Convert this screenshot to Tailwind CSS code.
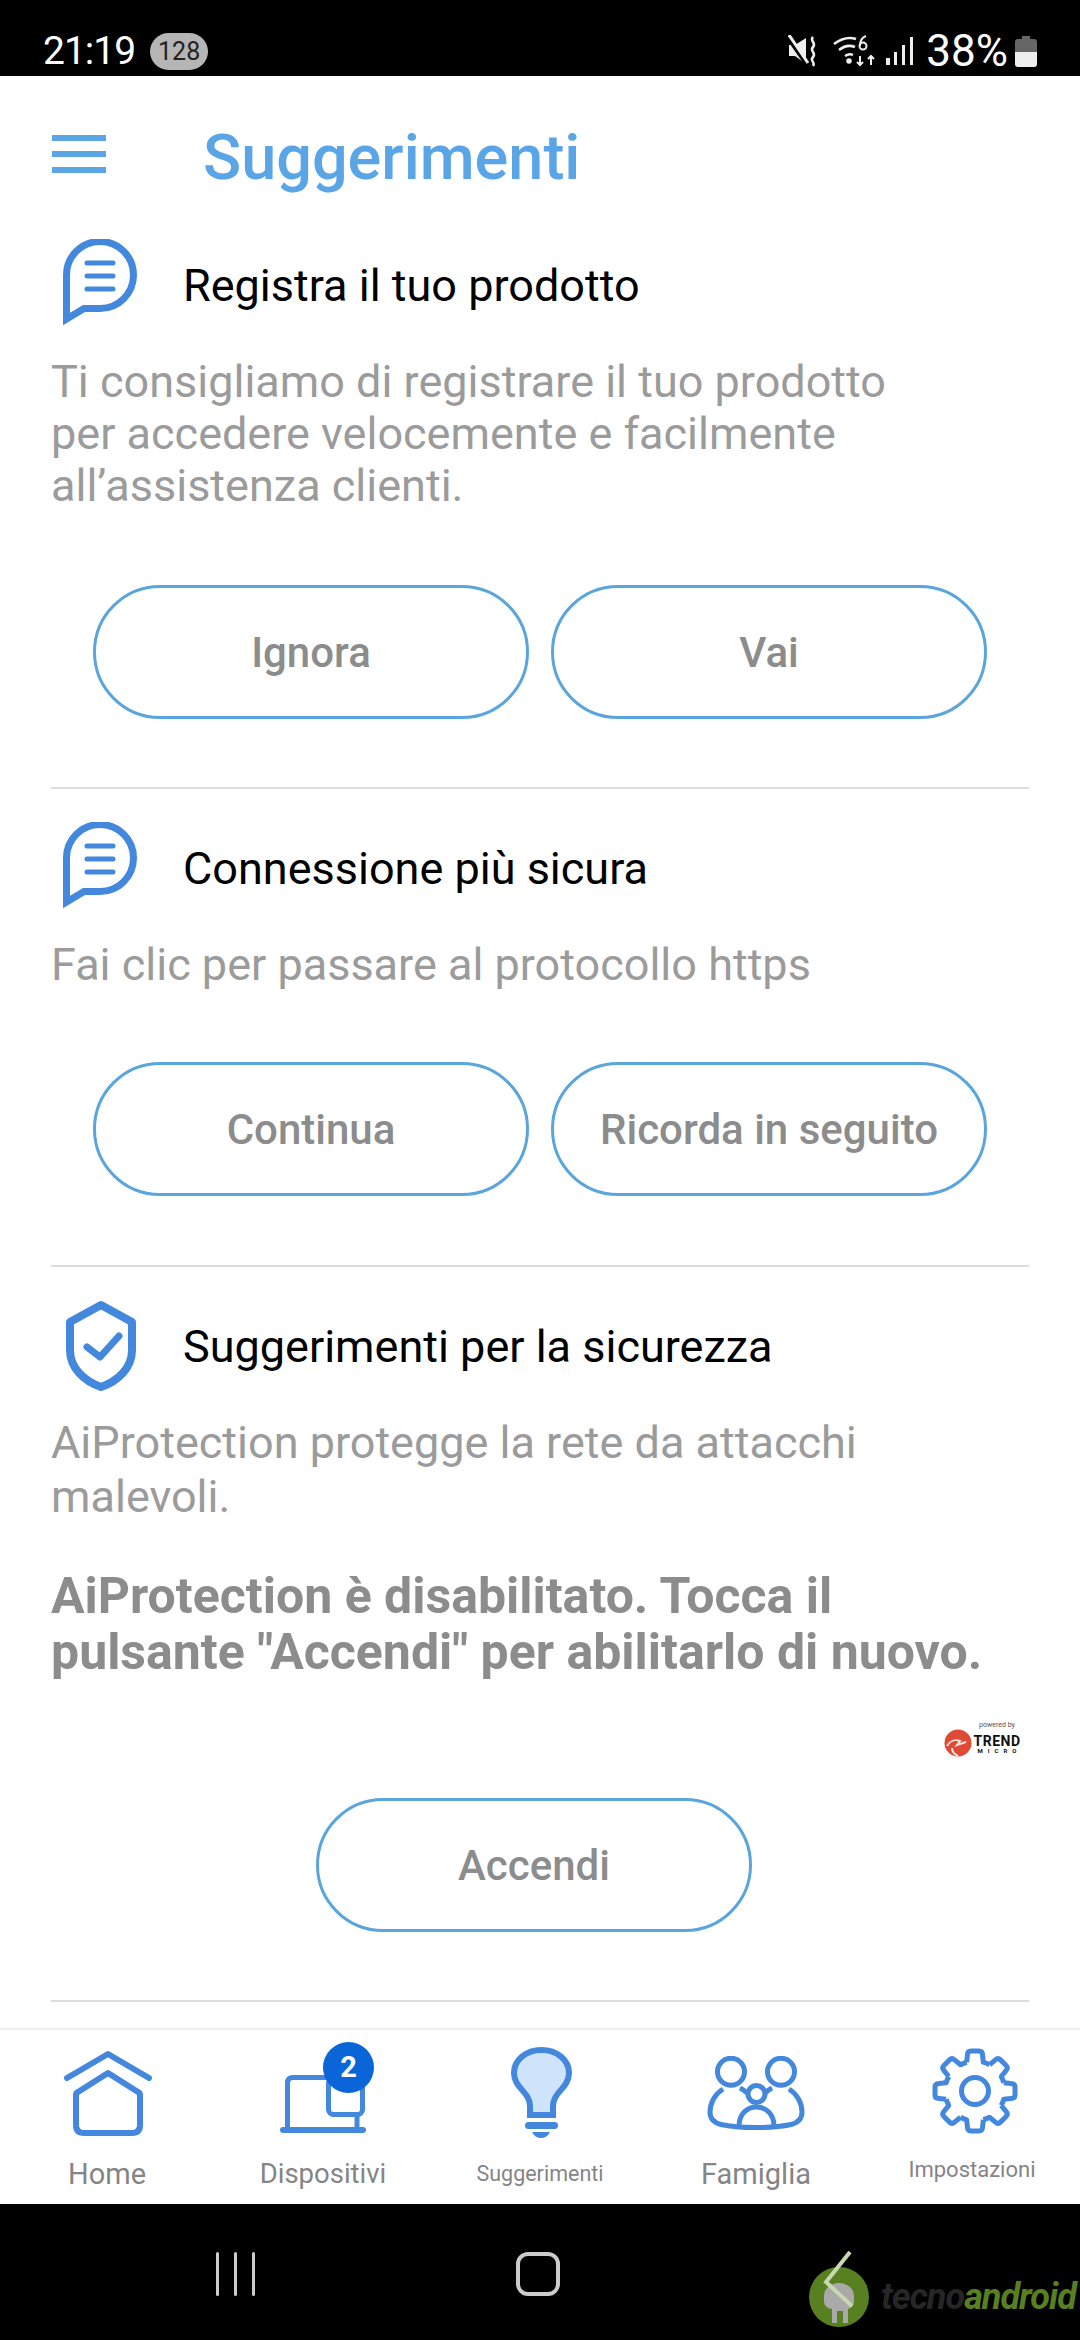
<!DOCTYPE html>
<html lang="it">
<head>
    <meta charset="UTF-8">
    <title>Suggerimenti</title>
    <script src="https://cdn.jsdelivr.net/npm/@tailwindcss/browser@4"></script>
</head>
<body class="bg-black font-['Roboto',sans-serif]">
<div class="w-[1080px] h-[2340px] flex flex-col overflow-hidden">

    <!-- status bar -->
    <div class="h-[76px] shrink-0 bg-black text-white flex items-center justify-between pl-[43px] pr-[43px] pt-[26px]">
        <div class="flex items-center gap-[15px]">
            <span class="text-[39px] leading-none tracking-[-1px]">21:19</span>
            <span class="w-[58px] h-[37px] rounded-full bg-[#b5b5b5] text-[#222] text-[25px] leading-[37px] text-center">128</span>
        </div>
        <div class="flex items-center">
            <svg class="w-[30px] h-[32px] mr-[15px]" viewBox="0 0 30 32" fill="none">
                <path d="M1 10h6L18 3v26L7 21H1z" fill="#eee"/>
                <path d="M0 2l21 30" stroke="#000" stroke-width="5"/>
                <path d="M1 0l19 28" stroke="#eee" stroke-width="3"/>
                <path d="M25 2c-4 4 4 6 0 10s4 6 0 10 3 5 0 9" stroke="#eee" stroke-width="2.500"/>
            </svg>
            <svg class="w-[44px] h-[32px] mr-[9px]" viewBox="0 0 44 32" fill="none" stroke="#eee" stroke-width="2.500">
                <path d="M1 9c8-6 16-7 22-5"/>
                <path d="M6 15c5-4 11-5 16-3"/>
                <path d="M12 21c3-2 6-2 8-1"/>
                <circle cx="16" cy="26" r="1.500" fill="#eee"/>
                <path d="M27 21v9m-3-3l3 3 3-3M38 30v-9m-3 3l3-3 3 3" stroke-width="2"/>
                <circle cx="30" cy="11" r="3.500" stroke-width="2"/>
                <path d="M33 1c-3 1-6 4-6 10" stroke-width="2"/>
            </svg>
            <svg class="w-[27px] h-[28px] mr-[13px]" viewBox="0 0 27 28" fill="#eee">
                <rect x="0" y="21" width="4" height="7"/>
                <rect x="8" y="15" width="3" height="13"/>
                <rect x="16" y="8" width="3" height="20"/>
                <rect x="24" y="0" width="3" height="28"/>
            </svg>
            <span class="text-[44px] leading-none">38%</span>
            <svg class="w-[22px] h-[31px] ml-[7px]" viewBox="0 0 22 31">
                <path d="M7 0h8v3h4q3 0 3 3v10H0V6q0-3 3-3h4z" fill="#666"/>
                <path d="M0 16h22v12q0 3-3 3H3q-3 0-3-3z" fill="#eee"/>
            </svg>
        </div>
    </div>

    <!-- content -->
    <div class="h-[2128px] shrink-0 bg-white flex flex-col">
        <header class="h-[146px] shrink-0 flex items-center pl-[52px] pt-[16px]">
            <div class="w-[54px] flex flex-col gap-[10px] mt-[-6px]">
                <span class="h-[6px] bg-[#5aa5e6]"></span>
                <span class="h-[6px] bg-[#5aa5e6]"></span>
                <span class="h-[6px] bg-[#5aa5e6]"></span>
            </div>
            <h1 class="ml-[97px] text-[63px] leading-none font-medium text-[#5aa5e6]">Suggerimenti</h1>
        </header>

        <main class="flex-1 px-[51px] flex flex-col">
            <section class="h-[567px] shrink-0 border-b-2 border-[#dcdcdc] flex flex-col">
                <div class="flex items-center h-[92px] mt-[17px]">
                    <svg class="w-[78px] h-[92px] ml-[9px]" viewBox="0 0 78 92" fill="none" stroke="#4388dc">
                        <path d="M6.500 36A33.500 33.500 0 1 1 40 69.500H24L6.500 80z" stroke-width="7" stroke-miterlimit="8"/>
                        <path d="M27 24h26M27 37h26M27 50h26" stroke-width="5" stroke-linecap="round"/>
                    </svg>
                    <h2 class="ml-[45px] text-[45px] leading-none text-black">Registra il tuo prodotto</h2>
                </div>
                <p class="mt-[25px] text-[45px] leading-[52px] text-[#9b9b9b]">Ti consigliamo di registrare il tuo prodotto<br>per accedere velocemente e facilmente<br>all’assistenza clienti.</p>
                <div class="mt-[73px] flex justify-center gap-[22px]">
                    <button class="w-[436px] h-[134px] rounded-full border-[3px] border-[#5aa5dc] text-[42px] font-medium text-[#8c8c8c]">Ignora</button>
                    <button class="w-[436px] h-[134px] rounded-full border-[3px] border-[#5aa5dc] text-[42px] font-medium text-[#8c8c8c]">Vai</button>
                </div>
            </section>

            <section class="h-[478px] shrink-0 border-b-2 border-[#dcdcdc] flex flex-col">
                <div class="flex items-center h-[92px] mt-[33px]">
                    <svg class="w-[78px] h-[92px] ml-[9px]" viewBox="0 0 78 92" fill="none" stroke="#4388dc">
                        <path d="M6.500 36A33.500 33.500 0 1 1 40 69.500H24L6.500 80z" stroke-width="7" stroke-miterlimit="8"/>
                        <path d="M27 24h26M27 37h26M27 50h26" stroke-width="5" stroke-linecap="round"/>
                    </svg>
                    <h2 class="ml-[45px] text-[45px] leading-none text-black">Connessione più sicura</h2>
                </div>
                <p class="mt-[25px] text-[45px] leading-[52px] text-[#9b9b9b]">Fai clic per passare al protocollo https</p>
                <div class="mt-[71px] flex justify-center gap-[22px]">
                    <button class="w-[436px] h-[134px] rounded-full border-[3px] border-[#5aa5dc] text-[42px] font-medium text-[#8c8c8c]">Continua</button>
                    <button class="w-[436px] h-[134px] rounded-full border-[3px] border-[#5aa5dc] text-[42px] font-medium text-[#8c8c8c]">Ricorda in seguito</button>
                </div>
            </section>

            <section class="h-[735px] shrink-0 border-b-2 border-[#dcdcdc] flex flex-col">
                <div class="flex items-center h-[92px] mt-[33px]">
                    <svg class="w-[78px] h-[92px] ml-[9px]" viewBox="0 0 78 92" fill="none" stroke="#4388dc">
                        <path d="M41 5L72 22V50C72 68 58 81 41 87C24 81 10 68 10 50V22z" stroke-width="8" stroke-linejoin="round"/>
                        <path d="M27 47L40 57L59 36" stroke-width="7" stroke-linecap="round" stroke-linejoin="round"/>
                    </svg>
                    <h2 class="ml-[45px] text-[45px] leading-none text-black">Suggerimenti per la sicurezza</h2>
                </div>
                <p class="mt-[24px] text-[45px] leading-[54px] text-[#9b9b9b]">AiProtection protegge la rete da attacchi<br>malevoli.</p>
                <p class="mt-[44px] text-[50px] leading-[56px] font-bold text-[#8c8c8c]">AiProtection è disabilitato. Tocca il<br>pulsante "Accendi" per abilitarlo di nuovo.</p>
                <div class="mt-[39px] h-[38px] flex justify-end items-end pr-[9px]">
                    <svg class="w-[28px] h-[28px]" viewBox="0 0 28 28">
                        <circle cx="14" cy="14" r="13.500" fill="#de4a36"/>
                        <path d="M3 17c3-5 8-7 13-5l-3 4 9-3M14 27c-4-2-6-5-6-8" fill="none" stroke="#fbe3dc" stroke-width="2"/>
                    </svg>
                    <div class="w-[46px] ml-[2px] flex flex-col items-center text-[#111] font-bold leading-none">
                        <span class="text-[7px] font-normal text-[#555] mb-[5px]">powered by</span>
                        <span class="text-[14px] tracking-[0.5px]">TREND</span>
                        <span class="text-[6px] tracking-[5px] mb-[3px] mr-[-5px]">MICRO</span>
                    </div>
                </div>
                <div class="mt-[41px] flex justify-center pr-[12px]">
                    <button class="w-[436px] h-[134px] rounded-full border-[3px] border-[#5aa5dc] text-[42px] font-medium text-[#8c8c8c]">Accendi</button>
                </div>
            </section>
        </main>

        <!-- bottom nav -->
        <nav class="h-[176px] shrink-0 border-t-2 border-[#f0f0f0] flex text-[#858585] text-center">
            <div class="w-[214px] flex flex-col items-center">
                <svg class="w-[92px] h-[92px] mt-[18px]" viewBox="0 0 92 92" fill="none" stroke="#4388dc" stroke-width="6" stroke-linejoin="round" stroke-linecap="round">
                    <path d="M6 30L47 6L88 30"/>
                    <path d="M47 25L77 44Q79 45 79 47V77Q79 85 71 85H23Q15 85 15 77V47Q15 45 17 44z"/>
                </svg>
                <span class="mt-[18px] text-[29px] leading-[32px]">Home</span>
            </div>
            <div class="w-[218px] flex flex-col items-center relative">
                <svg class="w-[92px] h-[92px] mt-[18px]" viewBox="0 0 92 92" fill="none" stroke="#4388dc" stroke-width="5">
                    <path d="M10.500 82V35Q10.500 29.500 16 29.500H60"/>
                    <path d="M80 66V82"/>
                    <path d="M6 82H86" stroke-width="6" stroke-linecap="round"/>
                    <rect x="51.500" y="30" width="34" height="36.500" rx="5"/>
                </svg>
                <span class="absolute left-[109px] top-[12px] w-[51px] h-[51px] rounded-full bg-[#0a66d8] text-white text-[29px] leading-[51px] font-bold">2</span>
                <span class="mt-[18px] text-[27.500px] leading-[32px]">Dispositivi</span>
            </div>
            <div class="w-[216px] flex flex-col items-center">
                <svg class="w-[64px] h-[92px] mt-[16px] ml-[2px]" viewBox="0 0 64 92" fill="none">
                    <path d="M32.500 4C17 4 5 14 5 27C5 42 21 46 21 60V69H44V60C44 46 60 42 60 27C60 14 48 4 32.500 4z" fill="#cfe3fb" stroke="#4388dc" stroke-width="6"/>
                    <rect x="16" y="76" width="33" height="7" rx="3.500" fill="#4388dc"/>
                    <path d="M23 86H41Q38 92 32 92T23 86z" fill="#4388dc"/>
                </svg>
                <span class="mt-[20px] text-[21.500px] leading-[32px]">Suggerimenti</span>
            </div>
            <div class="w-[216px] flex flex-col items-center">
                <svg class="w-[98px] h-[74px] mt-[26px]" viewBox="0 0 98 74" fill="none" stroke="#4388dc" stroke-width="5">
                    <ellipse cx="24" cy="15.700" rx="13.500" ry="13.500"/>
                    <ellipse cx="74" cy="15.700" rx="13.500" ry="13.500"/>
                    <ellipse cx="49.500" cy="38" rx="8.500" ry="8.500"/>
                    <path d="M16 33C8 38 3 47 3 56C3 63 8 67 14 68.500C25 71 37 71.500 49 71.500S73 71 84 68.500C90 67 95 63 95 56C95 47 90 38 82 33"/>
                    <path d="M32 70C32 58 40 51 49.500 51S67 58 67 70M33 32Q37 34 40 37M65 32Q61 34 58 37"/>
                </svg>
                <span class="mt-[28px] text-[29px] leading-[32px]">Famiglia</span>
            </div>
            <div class="w-[216px] flex flex-col items-center">
                <svg class="w-[88px] h-[88px] mt-[17px] ml-[5px]" viewBox="0 0 88 88" fill="none" stroke="#4388dc" stroke-width="5" stroke-linejoin="round">
                    <circle cx="44" cy="44" r="13.500"/>
                    <path id="gear-tooth" d="M35.700 15.200L36.400 8Q36.600 4 40 4H48Q51.400 4 51.600 8L52.300 15.200A30 30 0 0 1 58.500 17.800"/>
                    <use href="#gear-tooth" transform="rotate(45 44 44)"/>
                    <use href="#gear-tooth" transform="rotate(90 44 44)"/>
                    <use href="#gear-tooth" transform="rotate(135 44 44)"/>
                    <use href="#gear-tooth" transform="rotate(180 44 44)"/>
                    <use href="#gear-tooth" transform="rotate(225 44 44)"/>
                    <use href="#gear-tooth" transform="rotate(270 44 44)"/>
                    <use href="#gear-tooth" transform="rotate(315 44 44)"/>
                </svg>
                <span class="mt-[19px] text-[22px] leading-[32px]">Impostazioni</span>
            </div>
        </nav>
    </div>

    <!-- android nav bar -->
    <div class="flex-1 bg-black relative flex items-start pt-[48px]">
        <div class="ml-[216px] flex gap-[15px]">
            <span class="w-[3px] h-[44px] bg-[#ccc] rounded-full"></span>
            <span class="w-[3px] h-[44px] bg-[#ccc] rounded-full"></span>
            <span class="w-[3px] h-[44px] bg-[#ccc] rounded-full"></span>
        </div>
        <span class="ml-[261px] w-[44px] h-[44px] rounded-[12px] border-[4px] border-[#ccc]"></span>
        <div class="absolute left-[808px] top-[46px] flex items-center">
            <svg class="w-[64px] h-[80px]" viewBox="0 0 64 80">
                <circle cx="31" cy="47" r="30" fill="#587f20"/>
                <path d="M16 46a15 13 0 0 1 30 0v6a8 8 0 0 1-6 7v14h-5v-12h-6v12h-5v-14a8 8 0 0 1-8-7z" fill="#a9a9a9"/>
                <path d="M42 2L18 32l26 24" fill="none" stroke="#c8d8b0" stroke-width="4"/>
            </svg>
            <span class="ml-[9px] mt-[14px] text-[36px] leading-none font-bold italic tracking-[-1px] text-[#262626]">tecno</span><span class="mt-[14px] text-[36px] leading-none font-bold italic tracking-[-1px] text-[#587f20]">android</span>
        </div>
    </div>
</div>
</body>
</html>
